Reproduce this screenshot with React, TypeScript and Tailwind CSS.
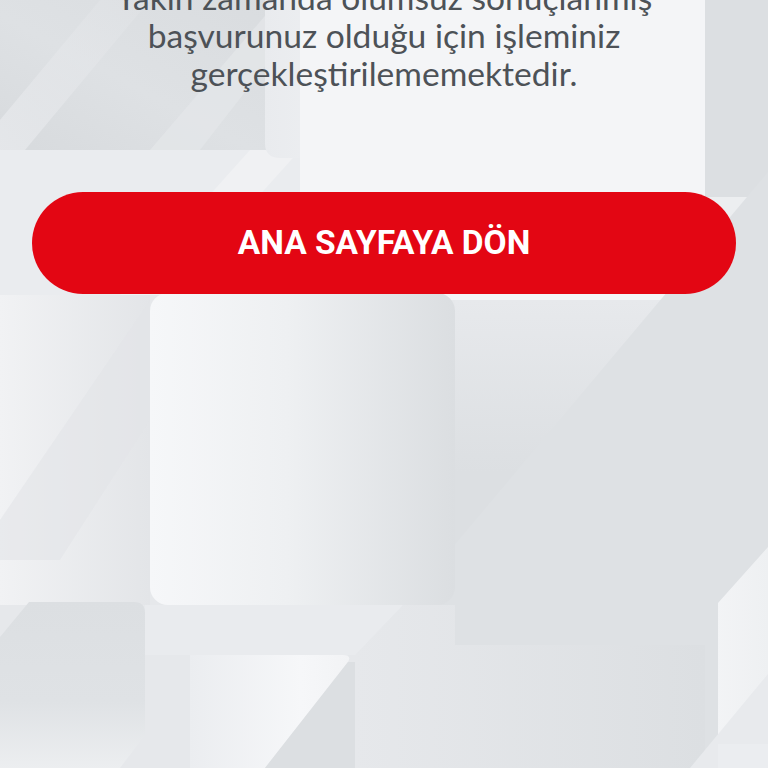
import React from 'react';

const Backdrop: React.FC = () => (
  <svg
    className="absolute inset-0 h-full w-full"
    viewBox="0 0 768 768"
    preserveAspectRatio="none"
    aria-hidden="true"
  >
    <defs>
      <linearGradient id="tl" x1="0" y1="1" x2="1" y2="0">
        <stop offset="0" stopColor="#d7dadd" />
        <stop offset="0.45" stopColor="#dee1e4" />
        <stop offset="1" stopColor="#d9dcdf" />
      </linearGradient>
      <linearGradient id="tlStrip" x1="0" y1="1" x2="1" y2="0">
        <stop offset="0" stopColor="#e6e8eb" stopOpacity="0.9" />
        <stop offset="1" stopColor="#e6e8eb" stopOpacity="0.2" />
      </linearGradient>
      <linearGradient id="topMid" x1="0" y1="0" x2="1" y2="0">
        <stop offset="0" stopColor="#e9ebee" />
        <stop offset="1" stopColor="#f3f4f6" />
      </linearGradient>
      <linearGradient id="bigCard" x1="0" y1="0" x2="1" y2="0">
        <stop offset="0" stopColor="#f6f7f9" />
        <stop offset="0.45" stopColor="#eef0f2" />
        <stop offset="1" stopColor="#dbdee1" />
      </linearGradient>
      <linearGradient id="leftCol" x1="0" y1="0" x2="1" y2="0">
        <stop offset="0" stopColor="#f1f2f4" />
        <stop offset="1" stopColor="#e3e5e8" />
      </linearGradient>
      <linearGradient id="rightBlock" x1="0" y1="0" x2="0" y2="1">
        <stop offset="0" stopColor="#e7e9ec" />
        <stop offset="0.5" stopColor="#dcdfe2" />
        <stop offset="1" stopColor="#dcdfe2" />
      </linearGradient>
      <linearGradient id="blDark" x1="0" y1="0" x2="0" y2="1">
        <stop offset="0" stopColor="#dcdfe2" />
        <stop offset="0.6" stopColor="#dfe2e5" />
        <stop offset="1" stopColor="#eceef0" />
      </linearGradient>
      <linearGradient id="bLight" x1="0" y1="0" x2="1" y2="0">
        <stop offset="0" stopColor="#ebedf0" />
        <stop offset="0.7" stopColor="#f6f7f9" />
        <stop offset="1" stopColor="#f2f3f5" />
      </linearGradient>
      <linearGradient id="lowMid" x1="0" y1="0" x2="1" y2="0">
        <stop offset="0" stopColor="#e6e8eb" />
        <stop offset="1" stopColor="#dcdfe2" />
      </linearGradient>
      <linearGradient id="rightLight" x1="0" y1="0" x2="1" y2="0">
        <stop offset="0" stopColor="#f4f5f7" />
        <stop offset="1" stopColor="#eef0f2" />
      </linearGradient>
    </defs>

    {/* base */}
    <rect x="0" y="0" width="768" height="768" fill="#e6e8eb" />

    {/* upper left block */}
    <rect x="0" y="0" width="280" height="150" fill="url(#tl)" />
    <polygon points="0,150 0,120 100,0 150,0 25,150" fill="url(#tlStrip)" />
    <polygon points="150,150 270,10 270,60 200,150" fill="#e4e6e9" opacity="0.8" />

    {/* band under it */}
    <rect x="0" y="150" width="300" height="145" fill="#eaecef" />
    <polygon points="120,295 250,150 300,150 170,295" fill="#f0f1f3" />

    {/* top middle rounded panel */}
    <path d="M265 0 H425 V158 H280 Q265 158 265 143 Z" fill="url(#topMid)" />

    {/* text area */}
    <rect x="300" y="0" width="405" height="300" fill="#f4f5f7" />

    {/* right strip */}
    <rect x="705" y="0" width="63" height="197" fill="#dcdfe2" />
    <rect x="705" y="197" width="63" height="103" fill="#eceef0" />

    {/* right block behind the diagonal */}
    <rect x="455" y="300" width="250" height="345" fill="url(#rightBlock)" />

    {/* long diagonal, darker to the right */}
    <polygon points="768,172 768,768 267,768" fill="#dee1e4" />

    {/* left column */}
    <rect x="0" y="295" width="150" height="310" fill="url(#leftCol)" />
    <polygon points="150,300 150,420 60,560 0,560 0,520" fill="#e3e5e8" opacity="0.6" />

    {/* big light rounded card */}
    <rect x="150" y="293" width="305" height="312" rx="18" fill="url(#bigCard)" />

    {/* lower band between shapes */}
    <polygon points="145,605 403,605 363,655 145,655" fill="#e9ebee" />
    <polygon points="355,655 403,605 455,605 455,645 705,645 705,768 355,768" fill="url(#lowMid)" />

    {/* bottom left dark tile */}
    <path
      d="M29 602 H134 Q145 602 145 613 V735 L120 768 H0 V637 Z"
      fill="url(#blDark)"
    />

    {/* bottom light tile */}
    <path d="M190 655 H343 Q352 655 348 662 L265 768 H190 Z" fill="url(#bLight)" />
    <polygon points="348,662 355,662 355,768 265,768" fill="#dcdfe2" />

    {/* right light shapes */}
    <polygon points="718,603 768,547 768,768 700,768 718,745" fill="url(#rightLight)" />
    <polygon points="768,674 768,768 690,768" fill="#e8eaed" />
    <rect x="718" y="744" width="50" height="24" fill="#ebedf0" />
  </svg>
);

export default function App() {
  return (
    <div className="relative h-[768px] w-full overflow-hidden bg-[#e6e8eb]">
      <Backdrop />
      <div className="relative flex flex-col items-center">
        <p
          className="-mt-[22px] text-center text-[33.6px] font-normal leading-[38px] text-[#4d5257]"
          style={{ fontFamily: 'Lato, "Open Sans", sans-serif' }}
        >
          Yakın zamanda olumsuz sonuçlanmış
          <br />
          başvurunuz olduğu için işleminiz
          <br />
          gerçekleştirilememektedir.
        </p>
        <button
          type="button"
          className="mt-[100px] flex h-[102px] w-[704px] items-center justify-center rounded-full bg-[#e30613] text-[33.5px] font-bold text-white"
          style={{ fontFamily: 'Roboto, "Liberation Sans", sans-serif' }}
        >
          ANA SAYFAYA DÖN
        </button>
      </div>
    </div>
  );
}
